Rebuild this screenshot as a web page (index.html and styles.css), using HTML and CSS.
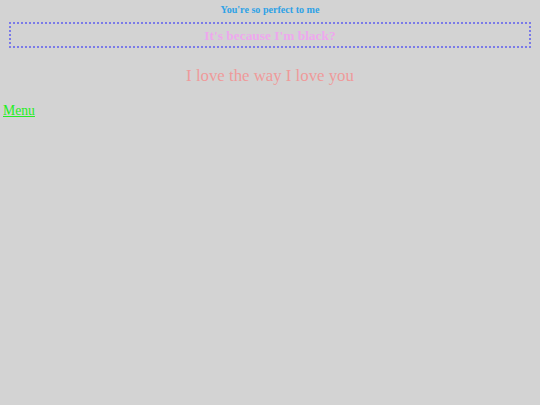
FILE: index.html
```html
<!DOCTYPE html>
<html>
<head>
<meta charset="utf-8">
<link rel="stylesheet" href="styles.css">
</head>
<body>
<div class="tagline">You're so perfect to me</div>
<div class="box"><span class="question">It's because I'm black?</span></div>
<p class="love">I love the way I love you</p>
<a class="menu" href="#">Menu</a>
</body>
</html>
```
FILE: styles.css
```css
html, body {
  margin: 0;
  padding: 0;
  background: #d3d3d3;
  font-family: "Liberation Serif", "Times New Roman", serif;
}
body {
  padding-top: 3px;
}
.tagline {
  text-align: center;
  font-size: 10.1px;
  font-weight: bold;
  color: #2ea2e6;
  line-height: 13px;
}
.box {
  margin: 6px 9px 0 9px;
  border: 2px dotted #7a7ae8;
  height: 22px;
  text-align: center;
  line-height: 22px;
}
.question {
  font-size: 13.4px;
  font-weight: bold;
  color: #eea8ee;
}
.love {
  margin: 18px 0 0 0;
  text-align: center;
  font-size: 16.8px;
  line-height: 20px;
  color: #ef9a9a;
}
.menu {
  display: inline-block;
  margin: 16px 0 0 3px;
  font-size: 13.7px;
  line-height: 17px;
  color: #22ee22;
}
```
